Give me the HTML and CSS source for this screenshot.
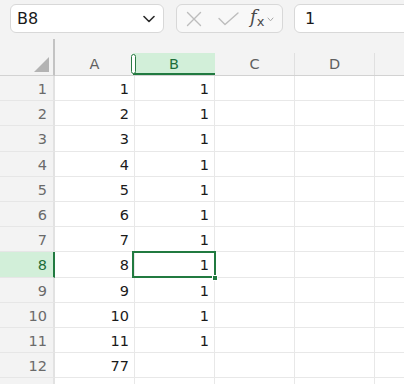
FILE: index.html
```html
<!DOCTYPE html>
<html>
<head>
<meta charset="utf-8">
<link rel="stylesheet" href="styles.css">
</head>
<body>
<div class="toolbar">
  <div class="namebox">
    <span class="nb-text">B8</span>
    <svg class="nb-chev" width="12" height="8" viewBox="0 0 12 8"><path d="M1 1.5 L6 6.5 L11 1.5" fill="none" stroke="#2b2b2b" stroke-width="1.6" stroke-linecap="round" stroke-linejoin="round"/></svg>
  </div>
  <div class="fxbox">
    <svg class="ic-x" width="16" height="16" viewBox="0 0 16 16"><path d="M1.5 1.5 L14.5 14.5 M14.5 1.5 L1.5 14.5" stroke="#bdbdbd" stroke-width="1.4" fill="none" stroke-linecap="round"/></svg>
    <svg class="ic-check" width="21" height="14" viewBox="0 0 21 14"><path d="M1 6.5 L7 12.5 L20 1" stroke="#bdbdbd" stroke-width="1.4" fill="none" stroke-linecap="round" stroke-linejoin="round"/></svg>
    <span class="fx"><i>f</i><span class="fx-x">x</span></span>
    <svg class="ic-small" width="7" height="5" viewBox="0 0 7 5"><path d="M1 1 L3.5 3.8 L6 1" stroke="#a8a8a8" stroke-width="1" fill="none" stroke-linecap="round"/></svg>
  </div>
  <div class="formula">1</div>
</div>
<div class="sheet">
  <div class="corner"><span class="tri"></span></div>
  <div class="colhead"><span class="lbl">A</span></div>
  <div class="colhead sel"><span class="lbl">B</span><span class="handle"></span></div>
  <div class="colhead"><span class="lbl">C</span></div>
  <div class="colhead"><span class="lbl">D</span></div>
  <div class="colhead rest"><span class="lbl"></span></div>

  <div class="rowhead">1</div><div class="cell">1</div><div class="cell">1</div><div class="cell"></div><div class="cell"></div><div class="cell rest"></div>
  <div class="rowhead">2</div><div class="cell">2</div><div class="cell">1</div><div class="cell"></div><div class="cell"></div><div class="cell rest"></div>
  <div class="rowhead">3</div><div class="cell">3</div><div class="cell">1</div><div class="cell"></div><div class="cell"></div><div class="cell rest"></div>
  <div class="rowhead">4</div><div class="cell">4</div><div class="cell">1</div><div class="cell"></div><div class="cell"></div><div class="cell rest"></div>
  <div class="rowhead">5</div><div class="cell">5</div><div class="cell">1</div><div class="cell"></div><div class="cell"></div><div class="cell rest"></div>
  <div class="rowhead">6</div><div class="cell">6</div><div class="cell">1</div><div class="cell"></div><div class="cell"></div><div class="cell rest"></div>
  <div class="rowhead">7</div><div class="cell">7</div><div class="cell">1</div><div class="cell"></div><div class="cell"></div><div class="cell rest"></div>
  <div class="rowhead sel">8</div><div class="cell">8</div><div class="cell active">1<span class="fill"></span></div><div class="cell"></div><div class="cell"></div><div class="cell rest"></div>
  <div class="rowhead">9</div><div class="cell">9</div><div class="cell">1</div><div class="cell"></div><div class="cell"></div><div class="cell rest"></div>
  <div class="rowhead">10</div><div class="cell">10</div><div class="cell">1</div><div class="cell"></div><div class="cell"></div><div class="cell rest"></div>
  <div class="rowhead">11</div><div class="cell">11</div><div class="cell">1</div><div class="cell"></div><div class="cell"></div><div class="cell rest"></div>
  <div class="rowhead">12</div><div class="cell">77</div><div class="cell"></div><div class="cell"></div><div class="cell"></div><div class="cell rest"></div>
  <div class="rowhead">13</div><div class="cell"></div><div class="cell"></div><div class="cell"></div><div class="cell"></div><div class="cell rest"></div>
</div>
</body>
</html>
```
FILE: styles.css
```css
* { box-sizing: border-box; }
html, body { margin: 0; padding: 0; }
body {
  width: 404px;
  height: 384px;
  overflow: hidden;
  background: #ffffff;
  font-family: "DejaVu Sans", sans-serif;
  color: #1f1f1f;
}
.toolbar {
  height: 39px;
  background: #f3f3f3;
  display: flex;
  align-items: flex-start;
  padding: 4px 0 0 10px;
  gap: 12px;
  overflow: hidden;
}
.namebox {
  width: 154px;
  height: 29px;
  background: #fff;
  border: 1px solid #d8d8d8;
  border-radius: 6px;
  display: flex;
  align-items: center;
  justify-content: space-between;
  padding: 0 8px 0 6px;
  font-size: 16px;
}
.nb-text { color: #1a1a1a; }
.fxbox {
  width: 107px;
  height: 29px;
  background: #f8f8f8;
  border: 1px solid #d8d8d8;
  border-radius: 6px;
  display: flex;
  align-items: center;
  padding: 0 0 0 9px;
}
.ic-x { margin-right: 16px; }
.ic-check { margin-right: 11px; margin-top: 1px; }
.fx {
  font-family: "DejaVu Serif", serif;
  color: #4a4a4a;
  font-size: 18px;
  line-height: 1;
  display: flex;
  align-items: baseline;
  margin-top: -3px;
}
.fx i { font-style: italic; }
.fx-x { font-size: 13px; font-family: "DejaVu Sans", sans-serif; position: relative; top: 3px; margin-left: 0; }
.ic-small { margin-left: 3px; margin-top: 1px; }
.formula {
  flex: 1;
  height: 29px;
  margin-left: -1px;
  margin-right: -12px;
  background: #fff;
  border: 1px solid #d8d8d8;
  border-radius: 6px;
  display: flex;
  align-items: center;
  padding-left: 10px;
  font-size: 16px;
  color: #1a1a1a;
}
.sheet {
  display: grid;
  grid-template-columns: 55px 80px 80px 80px 80px 1fr;
  grid-template-rows: 37px repeat(13, 25.2px);
  font-size: 14.5px;
}
.corner {
  background: #f3f3f3;
  border-right: 2px solid #c3c3c3;
  border-bottom: 1px solid #d2d2d2;
  position: relative;
}
.tri {
  position: absolute;
  right: 4px;
  bottom: 3px;
  width: 0;
  height: 0;
  border-left: 15px solid transparent;
  border-bottom: 15px solid #b3b3b3;
}
.colhead {
  background: #f3f3f3;
  border-bottom: 1px solid #d2d2d2;
  padding-top: 14px;
  position: relative;
}
.colhead .lbl {
  display: flex;
  height: 22px;
  align-items: center;
  justify-content: center;
  color: #5f5f5f;
  font-size: 14.5px;
  border-right: 1px solid #e0e0e0;
}
.colhead.rest .lbl { border-right: none; }
.colhead.sel .lbl {
  background: #d2efd9;
  color: #1e6e3a;
  border-right: 1px solid #d2efd9;
  border-bottom: 2px solid #217a40;
  margin-left: -2px;
  margin-right: -1px;
  padding-top: 2px;
}
.handle {
  position: absolute;
  left: -4px;
  top: 15px;
  width: 5px;
  height: 20px;
  background: #fff;
  border: 1.5px solid #2a7a44;
  border-radius: 3px;
}
.rowhead {
  background: #f3f3f3;
  border-right: 2px solid #e2e2e2;
  border-bottom: 1px solid #e6e6e6;
  display: flex;
  align-items: center;
  justify-content: flex-end;
  padding: 2px 6px 0 0;
  color: #6a6a6a;
}
.rowhead.sel {
  background: #d2efd9;
  color: #1e6e3a;
  border-right: 2px solid #217a40;
}
.cell {
  border-right: 1px solid #e8e8e8;
  border-bottom: 1px solid #e8e8e8;
  display: flex;
  align-items: center;
  justify-content: flex-end;
  padding: 2px 5px 0 0;
  color: #1a1a1a;
  position: relative;
}
.cell.rest { border-right: none; }
.cell.active::after {
  content: "";
  position: absolute;
  left: -3px;
  top: -1px;
  right: -2px;
  bottom: -1px;
  border: 2px solid #217a40;
}
.fill {
  position: absolute;
  right: -4px;
  bottom: -4px;
  width: 6px;
  height: 6px;
  background: #217a40;
  border: 1px solid #fff;
  z-index: 2;
}
```
